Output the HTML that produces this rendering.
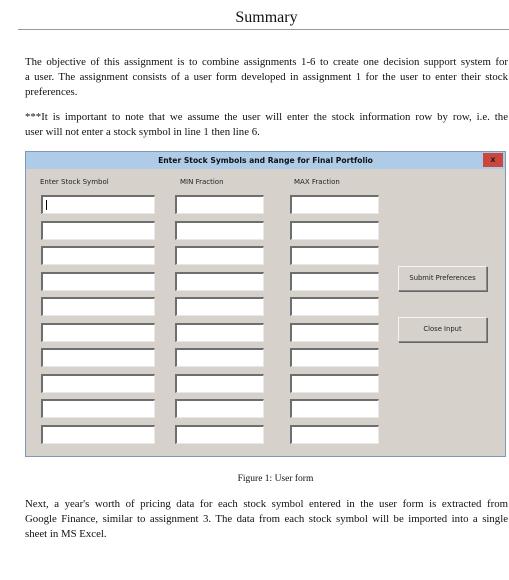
<!DOCTYPE html>
<html><head><meta charset="utf-8"><style>
body{margin:0;width:509px;height:580px;background:#fff;position:relative;overflow:hidden;font-family:"Liberation Serif",serif;color:#111}
.a{position:absolute}
.l{position:absolute;left:25px;width:483px;font-size:10.8px;line-height:15px;text-align:justify;text-align-last:justify;white-space:nowrap}
.l.e{text-align-last:left}
.dlg{position:absolute;left:25px;top:151px;width:481px;height:306px;background:#d6d2cb;border:1px solid #7d98b8;box-sizing:border-box}
.tb{position:absolute;left:0;top:0;right:0;height:17px;background:#aecbe8;font-family:"DejaVu Sans",sans-serif;font-weight:bold;font-size:7.6px;text-align:center;line-height:17px;color:#111}
.x{position:absolute;right:2px;top:1px;width:20px;height:14px;background:#c9473e;color:#222;font-size:8px;line-height:14px;text-align:center}
.lbl{position:absolute;font-family:"DejaVu Sans",sans-serif;font-size:7px;color:#222;top:26px}
.in{position:absolute;background:#fff;border-top:2px solid #6e6e6e;border-left:2px solid #6e6e6e;border-right:1px solid #e8e8e8;border-bottom:1px solid #e8e8e8;box-sizing:border-box;height:19px}
.btn{position:absolute;left:372px;width:89px;height:25px;border:1px solid #888;border-top-color:#f4f4f4;border-left-color:#f4f4f4;box-sizing:border-box;font-family:"DejaVu Sans",sans-serif;font-size:6.8px;text-align:center;line-height:23px;color:#222;background:#d6d2cb;box-shadow:1px 1px 0 #666}
</style></head><body>
<div class="a" style="left:0;width:509px;top:9px;text-align:center;font-size:16px;padding-left:24px;box-sizing:border-box">Summary</div>
<div class="a" style="left:18px;width:491px;top:29px;height:1px;background:#999"></div>
<div class="l" style="top:55px">The objective of this assignment is to combine assignments 1-6 to create one decision support system for</div>
<div class="l" style="top:70px">a user. The assignment consists of a user form developed in assignment 1 for the user to enter their stock</div>
<div class="l e" style="top:85px">preferences.</div>
<div class="l" style="top:110px">***It is important to note that we assume the user will enter the stock information row by row, i.e. the</div>
<div class="l e" style="top:125px">user will not enter a stock symbol in line 1 then line 6.</div>
<div class="dlg">
<div class="tb">Enter Stock Symbols and Range for Final Portfolio<div class="x">x</div></div>
<div class="lbl" style="left:14px">Enter Stock Symbol</div>
<div class="lbl" style="left:154px">MIN Fraction</div>
<div class="lbl" style="left:268px">MAX Fraction</div>
<div class="btn" style="top:114px">Submit Preferences</div>
<div class="btn" style="top:165px">Close Input</div>
<div id="rows"></div>
</div>
<div class="a" style="left:0;width:509px;top:474px;text-align:center;font-size:9.5px;padding-left:42px;box-sizing:border-box">Figure 1: User form</div>
<div class="l" style="top:497px">Next, a year's worth of pricing data for each stock symbol entered in the user form is extracted from</div>
<div class="l" style="top:512px">Google Finance, similar to assignment 3. The data from each stock symbol will be imported into a single</div>
<div class="l e" style="top:527px">sheet in MS Excel.</div>
<script>
var r=document.getElementById('rows'),h='';
for(var i=0;i<10;i++){var t=43+i*25.5;
h+='<div class="in" style="left:15px;width:114px;top:'+t+'px">'+(i==0?'<div style="position:absolute;left:3px;top:3px;width:1px;height:10px;background:#000"></div>':'')+'</div>';
h+='<div class="in" style="left:149px;width:89px;top:'+t+'px"></div>';
h+='<div class="in" style="left:264px;width:89px;top:'+t+'px"></div>';}
r.innerHTML=h;
</script>
</body></html>
